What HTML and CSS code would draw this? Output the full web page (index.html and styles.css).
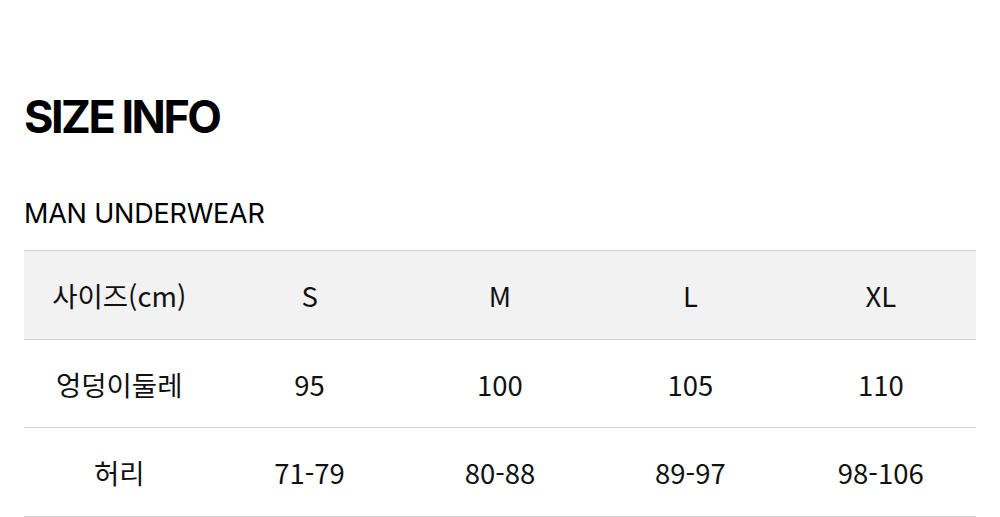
FILE: index.html
```html
<!DOCTYPE html>
<html lang="ko">
<head>
<meta charset="utf-8">
<link rel="stylesheet" href="styles.css">
</head>
<body>
<main class="page">
  <h1 class="title">SIZE INFO</h1>
  <h2 class="subtitle">MAN UNDERWEAR</h2>
  <table class="size-table">
    <thead>
      <tr><th>사이즈(cm)</th><th>S</th><th>M</th><th>L</th><th>XL</th></tr>
    </thead>
    <tbody>
      <tr class="row-short"><td>엉덩이둘레</td><td>95</td><td>100</td><td>105</td><td>110</td></tr>
      <tr><td>허리</td><td>71-79</td><td>80-88</td><td>89-97</td><td>98-106</td></tr>
    </tbody>
  </table>
</main>
</body>
</html>
```
FILE: styles.css
```css
html, body { margin: 0; padding: 0; background: #fff; }
.page { padding: 0 24px; }
.title {
  margin: 0;
  padding-top: 90px;
  font-family: Inter, "Noto Sans", sans-serif;
  font-weight: 700;
  font-size: 45px;
  line-height: 54px;
  letter-spacing: -2.5px;
  color: #000;
}
.subtitle {
  margin: 0;
  padding-top: 52px;
  font-family: Inter, "Noto Sans", sans-serif;
  font-weight: 400;
  font-size: 27px;
  line-height: 36px;
  letter-spacing: -0.2px;
  color: #000;
  height: 54px;
}
.size-table {
  width: 100%;
  border-collapse: collapse;
  table-layout: fixed;
  font-family: "Noto Sans CJK KR", "Noto Sans", sans-serif;
  font-size: 27.5px;
  color: #111;
}
.size-table th, .size-table td {
  height: 88px;
  padding: 0;
  text-align: center;
  font-weight: 400;
  border-top: 1px solid #d2d2d2;
  border-bottom: 1px solid #d2d2d2;
}
.size-table .row-short td { height: 87px; }
.size-table thead th { background: #f2f2f2; }
```
